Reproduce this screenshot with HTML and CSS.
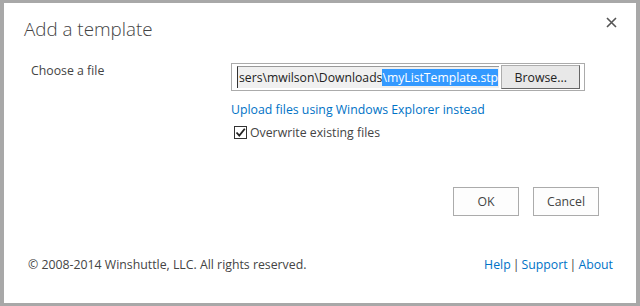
FILE: index.html
```html
<!DOCTYPE html>
<html>
<head>
<meta charset="utf-8">
<link rel="stylesheet" href="styles.css">
</head>
<body>
<div class="backdrop">
  <div class="dialog">
    <div class="header">
      <h1 class="title">Add a template</h1>
      <span class="close">
        <svg width="11" height="11" viewBox="0 0 11 11"><path d="M1 1L10 10M10 1L1 10" stroke="#555" stroke-width="1.6" fill="none"/></svg>
      </span>
    </div>
    <div class="form">
      <div class="label">Choose a file</div>
      <div class="fields">
        <div class="filebox">
          <div class="filepath"><span class="plain">sers\mwilson\Downloads</span><span class="sel">\myListTemplate.stp</span></div>
          <button class="browse">Browse...</button>
        </div>
        <a class="link upload">Upload files using Windows Explorer instead</a>
        <label class="check">
          <span class="box"><svg width="11" height="11" viewBox="0 0 11 11"><path d="M1.5 5.5L4.3 8.6L9.8 1.8" stroke="#222" stroke-width="1.8" fill="none"/></svg></span>
          Overwrite existing files
        </label>
      </div>
    </div>
    <div class="actions">
      <button class="btn">OK</button>
      <button class="btn">Cancel</button>
    </div>
    <div class="footer">
      <span class="copy">© 2008-2014 Winshuttle, LLC. All rights reserved.</span>
      <span class="links"><a class="link">Help</a><span class="sep">|</span><a class="link">Support</a><span class="sep">|</span><a class="link">About</a></span>
    </div>
  </div>
</div>
</body>
</html>
```
FILE: styles.css
```css
html, body {
  margin: 0;
  padding: 0;
}
body {
  width: 640px;
  height: 306px;
  overflow: hidden;
  font-family: "Open Sans", "Noto Sans", sans-serif;
  color: #444;
}
.backdrop {
  background: #a8a8a8;
  height: 306px;
  padding: 3px 4px 3px 4px;
  box-sizing: border-box;
}
.dialog {
  background: #fff;
  height: 300px;
  display: flex;
  flex-direction: column;
}
.header {
  display: flex;
  justify-content: space-between;
  align-items: flex-start;
  padding: 11px 19px 0 20px;
  height: 32px;
}
.title {
  margin: 2px 0 0 0;
  font-weight: 300;
  font-size: 18.8px;
  line-height: 26px;
  color: #444;
}
.close {
  display: flex;
  margin-top: 3px;
}
.form {
  display: flex;
  padding: 17px 0 0 27px;
}
.label {
  width: 200px;
  font-size: 12.3px;
  line-height: 16px;
  color: #444;
}
.fields {
  display: flex;
  flex-direction: column;
}
.filebox {
  width: 354px;
  height: 28px;
  border: 1px solid #ababab;
  display: flex;
  align-items: center;
  padding: 2px 4px 2px 5px;
  box-sizing: border-box;
  gap: 2px;
}
.filepath {
  width: 264px;
  height: 22px;
  border-left: 1px solid #333;
  border-top: 1px solid #999;
  background: #f0f0f0;
  display: flex;
  align-items: center;
  overflow: hidden;
  white-space: nowrap;
  font-size: 12.2px;
  color: #222;
  box-sizing: border-box;
  padding-left: 1px;
}
.sel {
  background: #3399ff;
  color: #fff;
}
.browse {
  width: 79px;
  height: 24px;
  border: 1px solid #adadad;
  border-right-color: #666;
  border-bottom-color: #666;
  background: #e8e8e8;
  font-family: inherit;
  font-size: 12.3px;
  color: #222;
  padding: 0;
}
.link {
  color: #0072c6;
  text-decoration: none;
  font-size: 12.3px;
}
.upload {
  margin-top: 10px;
  line-height: 17px;
}
.check {
  display: flex;
  align-items: center;
  gap: 3px;
  margin-top: 6px;
  margin-left: 3px;
  font-size: 12.3px;
  color: #444;
}
.box {
  width: 11px;
  height: 11px;
  border: 1px solid #333;
  display: flex;
}
.actions {
  display: flex;
  justify-content: flex-end;
  gap: 14px;
  padding: 0 37px 0 0;
  margin-top: 46px;
}
.btn {
  width: 66px;
  height: 29px;
  border: 1px solid #ababab;
  background: #fdfdfd;
  font-family: inherit;
  font-size: 12.3px;
  color: #444;
  padding: 0;
}
.footer {
  display: flex;
  justify-content: space-between;
  padding: 0 23px 0 24px;
  margin-top: 40px;
  font-size: 12.3px;
  color: #444;
}
.links {
  display: flex;
}
.sep {
  margin: 0 2px;
  color: #444;
}
```
